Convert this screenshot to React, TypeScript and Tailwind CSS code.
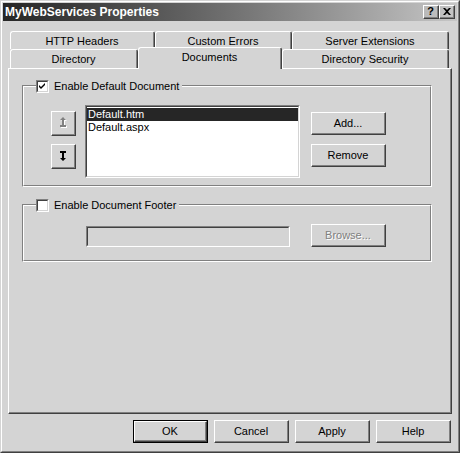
import type { ReactNode } from 'react';

// Win2000 style properties dialog, grayscale

const Raised = ({
  w,
  h,
  def,
  children,
}: {
  w: number;
  h: number;
  def?: boolean;
  children: ReactNode;
}) => {
  const btn = (
    <div className="h-full w-full border border-t-white border-l-white border-r-[#404040] border-b-[#404040]">
      <div className="flex h-full w-full items-center justify-center border-r border-b border-r-[#808080] border-b-[#808080]">
        {children}
      </div>
    </div>
  );
  return (
    <div className="shrink-0" style={{ width: w, height: h }}>
      {def ? <div className="h-full w-full border border-black">{btn}</div> : btn}
    </div>
  );
};

const Sunken = ({
  className,
  innerClass,
  children,
}: {
  className: string;
  innerClass: string;
  children?: ReactNode;
}) => (
  <div
    className={`shrink-0 border border-t-[#808080] border-l-[#808080] border-r-white border-b-white ${className}`}
  >
    <div
      className={`h-full w-full border border-t-[#404040] border-l-[#404040] border-r-[#d4d4d4] border-b-[#d4d4d4] ${innerClass}`}
    >
      {children}
    </div>
  </div>
);

const CheckBox = ({ checked }: { checked?: boolean }) => (
  <Sunken className="h-[13px] w-[13px]" innerClass="bg-white flex items-center justify-center">
    {checked && (
      <svg width="7" height="7" viewBox="0 0 7 7">
        <path d="M0 2 L2 4 L6 0 L6 2 L2 6 L0 4 Z" fill="#000" />
      </svg>
    )}
  </Sunken>
);

const GroupBox = ({
  label,
  checked,
  h,
  children,
}: {
  label: string;
  checked?: boolean;
  h: number;
  children: ReactNode;
}) => (
  <div
    className="relative ml-[13px] w-[410px] border border-t-[#808080] border-l-[#808080] border-r-white border-b-white"
    style={{ height: h }}
  >
    <div className="h-full w-full border border-t-white border-l-white border-r-[#808080] border-b-[#808080]">
      {children}
    </div>
    <div className="absolute left-[13px] top-[-6px] flex items-center bg-[#d4d4d4] pr-[3px]">
      <CheckBox checked={checked} />
      <span className="ml-[5px] text-[11px] leading-[13px]">{label}</span>
    </div>
  </div>
);

const Tab = ({
  label,
  w,
  h,
  active,
}: {
  label: string;
  w: number;
  h: number;
  active?: boolean;
}) => (
  <div
    className={`shrink-0 rounded-t-[3px] border-t border-l border-r border-t-white border-l-white border-r-[#404040] bg-[#d4d4d4] ${
      active ? 'relative z-10 mt-[-2px]' : ''
    }`}
    style={{ width: w, height: h }}
  >
    <div
      className={`flex h-full items-center justify-center border-r border-r-[#808080] text-[11px] ${
        active ? 'pb-[2px]' : 'pt-[1px]'
      }`}
    >
      {label}
    </div>
  </div>
);

const UpArrow = () => (
  <svg width="9" height="12" viewBox="0 0 9 12">
    <g transform="translate(1 1)">
      <path d="M4 0 L7 3 L5 3 L5 8 L7 8 L7 10 L1 10 L1 8 L3 8 L3 3 L1 3 Z" fill="#fff" />
    </g>
    <path d="M4 0 L7 3 L5 3 L5 8 L7 8 L7 10 L1 10 L1 8 L3 8 L3 3 L1 3 Z" fill="#808080" />
  </svg>
);

const DownArrow = () => (
  <svg width="8" height="11" viewBox="0 0 8 11">
    <path d="M1 0 L7 0 L7 2 L5 2 L5 7 L7 7 L4 10 L1 7 L3 7 L3 2 L1 2 Z" fill="#000" />
  </svg>
);

export default function App() {
  return (
    <div className="h-[453px] w-[460px] border border-t-[#d4d4d4] border-l-[#d4d4d4] border-r-[#404040] border-b-[#404040] bg-[#d4d4d4] font-['Liberation_Sans',Arial,sans-serif] text-black">
      <div className="h-full w-full border border-t-white border-l-white border-r-[#808080] border-b-[#808080] p-px">
        {/* title bar */}
        <div className="flex h-[18px] items-center bg-linear-to-r from-[#262626] to-[#c6c6c6] pl-[2px] pr-[2px]">
          <span className="flex-1 text-[12px] font-bold text-white">MyWebServices Properties</span>
          <Raised w={16} h={14}>
            <span className="text-[11px] font-bold leading-none">?</span>
          </Raised>
          <Raised w={16} h={14}>
            <svg width="8" height="7" viewBox="0 0 8 7">
              <path d="M0 0 L2 0 L4 2 L6 0 L8 0 L5 3.5 L8 7 L6 7 L4 5 L2 7 L0 7 L3 3.5 Z" fill="#000" />
            </svg>
          </Raised>
        </div>

        <div className="ml-[5px] mt-[10px] w-[444px]">
          {/* tabs */}
          <div className="flex pl-[2px]">
            <Tab label="HTTP Headers" w={145} h={18} />
            <Tab label="Custom Errors" w={137} h={18} />
            <Tab label="Server Extensions" w={157} h={18} />
          </div>
          <div className="flex h-[19px] items-start pl-[2px]">
            <Tab label="Directory" w={128} h={19} />
            <Tab label="Documents" w={144} h={22} active />
            <Tab label="Directory Security" w={167} h={19} />
          </div>

          {/* panel */}
          <div className="h-[346px] w-[444px] border border-t-white border-l-white border-r-[#404040] border-b-[#404040]">
            <div className="h-full w-full border-r border-b border-r-[#808080] border-b-[#808080] pt-[16px]">
              <GroupBox label="Enable Default Document" checked h={102}>
                <div className="flex items-start pl-[27px] pt-[18px]">
                  <div className="mt-[6px] flex flex-col gap-[8px]">
                    <Raised w={25} h={25}>
                      <UpArrow />
                    </Raised>
                    <Raised w={25} h={25}>
                      <DownArrow />
                    </Raised>
                  </div>
                  <Sunken className="ml-[9px] h-[73px] w-[215px]" innerClass="bg-white pt-px text-[11px] leading-[13px]">
                    <div className="bg-[#262626] pl-px text-white">Default.htm</div>
                    <div className="pl-px">Default.aspx</div>
                  </Sunken>
                  <div className="ml-[11px] mt-[7px] flex flex-col gap-[9px] text-[11px]">
                    <Raised w={75} h={23}>
                      Add...
                    </Raised>
                    <Raised w={75} h={23}>
                      Remove
                    </Raised>
                  </div>
                </div>
              </GroupBox>

              <div className="mt-[17px]">
                <GroupBox label="Enable Document Footer" h={58}>
                  <div className="flex items-start pl-[62px] pt-[18px]">
                    <Sunken className="mt-[2px] h-[21px] w-[204px]" innerClass="bg-[#d4d4d4]" />
                    <div className="ml-[21px]">
                      <Raised w={75} h={23}>
                        <span className="text-[11px] text-[#808080] [text-shadow:1px_1px_0_#fff]">Browse...</span>
                      </Raised>
                    </div>
                  </div>
                </GroupBox>
              </div>
            </div>
          </div>

          {/* dialog buttons */}
          <div className="mt-[6px] flex justify-end gap-[6px] pr-px text-[11px]">
            <Raised w={75} h={23} def>
              OK
            </Raised>
            <Raised w={75} h={23}>
              Cancel
            </Raised>
            <Raised w={75} h={23}>
              Apply
            </Raised>
            <Raised w={75} h={23}>
              Help
            </Raised>
          </div>
        </div>
      </div>
    </div>
  );
}
